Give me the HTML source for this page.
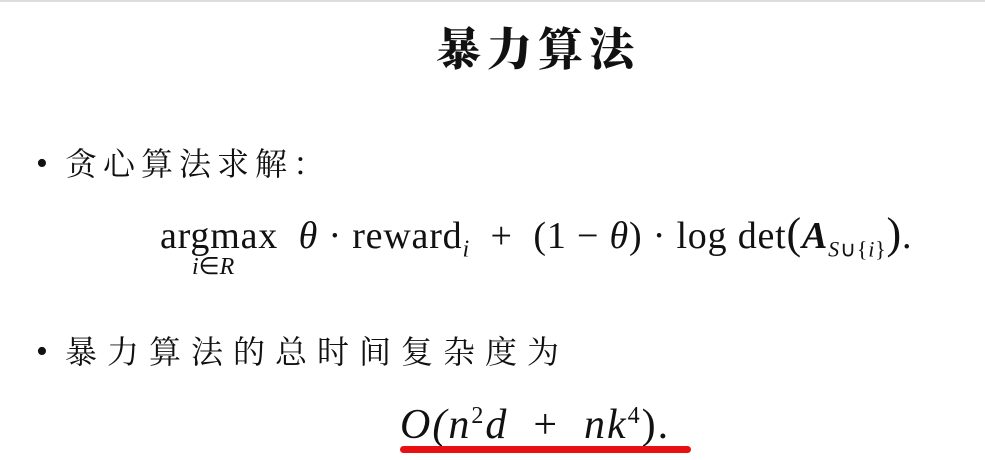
<!DOCTYPE html><html><head><meta charset="utf-8"><style>
body{margin:0;width:985px;height:460px;background:#fff;position:relative;overflow:hidden;font-family:"Liberation Serif",serif;color:#111}
.a{position:absolute;white-space:nowrap}
.cjk{font-family:"Liberation Sans","Noto Serif CJK SC","Noto Sans CJK SC",sans-serif}
i{font-style:italic}
</style></head><body>
<div style="position:absolute;left:0;top:0;width:985px;height:2px;background:#ddd"></div>
<div class="a cjk" style="left:436px;top:22px;font-size:45px;font-weight:900;letter-spacing:6px;line-height:56px">暴力算法</div>
<div class="a" style="left:36px;top:144px;font-size:34px;line-height:40px">•</div>
<div class="a cjk" style="left:65px;top:144px;font-size:32px;line-height:40px;letter-spacing:6px">贪心算法求解：</div>
<div class="a" style="left:160px;top:212px;font-size:38px;line-height:44px;letter-spacing:0.8px">argmax&nbsp;&nbsp;<i>θ</i> · reward<sub style="font-size:24px"><i>i</i></sub>&nbsp; + &nbsp;(1 − <i>θ</i>) · log det<span style="font-size:44px">(</span><b><i>A</i></b><sub style="font-size:22px"><i>S</i>∪{<i>i</i>}</sub><span style="font-size:44px">)</span>.</div>
<div class="a" style="left:192px;top:252px;font-size:24px"><i>i</i>∈<i>R</i></div>
<div class="a" style="left:36px;top:332px;font-size:34px;line-height:40px">•</div>
<div class="a cjk" style="left:65px;top:332px;font-size:32px;line-height:40px;letter-spacing:10px">暴力算法的总时间复杂度为</div>
<div class="a" style="left:400px;top:394px;font-size:42px;line-height:44px;font-style:italic;letter-spacing:2px">O(n<sup style="font-size:24px;font-style:normal">2</sup>d&nbsp;&nbsp;<span style="font-style:normal">+</span>&nbsp;&nbsp;nk<sup style="font-size:24px;font-style:normal">4</sup><span style="font-style:normal">).</span></div>
<div style="position:absolute;left:400px;top:446px;width:291px;height:7px;background:#e81010;border-radius:4px"></div>
</body></html>
